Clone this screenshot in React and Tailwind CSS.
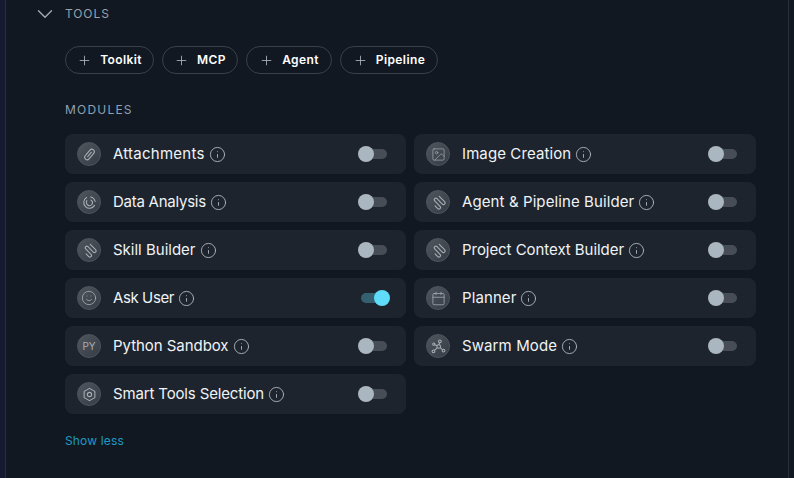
import React from "react";
import { ChevronDown, Plus, Info, Image, Smile, Calendar } from "lucide-react";

const PaperclipIcon = () => (
  <svg width="15" height="15" viewBox="0 0 14 14" fill="none" stroke="currentColor" strokeWidth="1" strokeLinecap="round">
    <g transform="rotate(40 7 7)">
      <path d="M7 4.200v5.400" />
      <path d="M4.700 9.500V3.600a2.300 2.300 0 0 1 4.600 0v6.800a2.300 2.300 0 0 1-4.600 0" />
    </g>
  </svg>
);

const PieIcon = () => (
  <svg width="15" height="15" viewBox="0 0 14 14" fill="none" stroke="currentColor" strokeWidth="1" strokeLinecap="round">
    <path d="M4.300 2.300a5.400 5.400 0 1 0 7.400 7.400" />
    <path d="M8 1.800a5.400 5.400 0 0 1 4.200 4.200" />
    <path d="M4.600 5.200a2.800 2.800 0 1 0 4.800 3.400c.8-1.500.2-3-1-3.800" />
  </svg>
);

const SpringIcon = () => (
  <svg width="15" height="15" viewBox="0 0 14 14" fill="none" stroke="currentColor" strokeWidth="1" strokeLinecap="round" strokeLinejoin="round">
    <g transform="rotate(45 7 7)">
      <path d="M3.500 2.500h7a1.500 1.500 0 0 1 0 3h-7a1.500 1.500 0 0 0 0 3h7a1.500 1.500 0 0 1 0 3H7" />
    </g>
  </svg>
);

const HexIcon = () => (
  <svg width="15" height="15" viewBox="0 0 14 14" fill="none" stroke="currentColor" strokeWidth="1" strokeLinejoin="round">
    <path d="M7 1.300 12 4.100v5.800l-5 2.800-5-2.800V4.100z" />
    <circle cx="7" cy="7" r="2" />
  </svg>
);

const SwarmIcon = () => (
  <svg width="15" height="15" viewBox="0 0 14 14" fill="none" stroke="currentColor" strokeWidth="1">
    <circle cx="7.200" cy="7" r="1.700" />
    <circle cx="8.300" cy="2.200" r="1.300" />
    <circle cx="2.300" cy="11.500" r="1.300" />
    <circle cx="11.700" cy="10.800" r="1.300" />
    <circle cx="2.600" cy="4.800" r="1" />
    <path d="M7.500 5.400 8 3.500M5.800 8.200 3.200 10.600M8.500 8 10.700 10M5.700 6.300 3.500 5.300" />
  </svg>
);

// tracking differs per row so the label widths follow the reference font
const modules = [
  { name: "Attachments", track: "tracking-[0.25px]", icon: <PaperclipIcon /> },
  { name: "Image Creation", track: "tracking-[0.1px]", icon: <Image size={15} strokeWidth={1.1} /> },
  { name: "Data Analysis", track: "tracking-[-0.25px]", icon: <PieIcon /> },
  { name: "Agent & Pipeline Builder", track: "tracking-[0.1px]", icon: <SpringIcon /> },
  { name: "Skill Builder", track: "tracking-[0px]", icon: <SpringIcon /> },
  { name: "Project Context Builder", track: "tracking-[-0.05px]", icon: <SpringIcon /> },
  { name: "Ask User", track: "tracking-[-0.4px]", icon: <Smile size={16} strokeWidth={1.2} />, on: true },
  { name: "Planner", track: "tracking-[0.1px]", icon: <Calendar size={15} strokeWidth={1.2} /> },
  { name: "Python Sandbox", track: "tracking-[-0.05px]", icon: <span className="text-[10px]">PY</span> },
  { name: "Swarm Mode", track: "tracking-[0.1px]", icon: <SwarmIcon /> },
  { name: "Smart Tools Selection", track: "tracking-[-0.15px]", icon: <HexIcon /> },
];

const chips = [
  { label: "Toolkit", width: "w-[89px]" },
  { label: "MCP", width: "w-[76px]" },
  { label: "Agent", width: "w-[86px]" },
  { label: "Pipeline", width: "w-[98px]" },
];

function Toggle({ on }) {
  return (
    <div className={`relative w-[26px] h-[10px] rounded-full ${on ? "bg-[#34606f]" : "bg-[#474d57]"}`}>
      {on ? (
        <div className="absolute right-[-3px] top-[-3px] w-4 h-4 rounded-full bg-[#5fdcfa]" />
      ) : (
        <div className="absolute left-[-3px] top-[-3px] w-4 h-4 rounded-full bg-[#aab6c0]" />
      )}
    </div>
  );
}

function ModuleRow({ name, icon, on, track }) {
  return (
    <div className="h-10 rounded-lg bg-[#1d242e] flex items-center pl-3 pr-[19px]">
      <div className="w-6 h-6 rounded-full border border-[#4f555e] bg-gradient-to-br from-[#50565e] to-[#363c45] flex items-center justify-center text-[#a9aeb5] shrink-0">
        {icon}
      </div>
      <span className={`ml-3 text-[15px] leading-[18px] mb-[1px] text-[#f0f3f6] ${track}`}>{name}</span>
      <Info size={17} strokeWidth={1.25} className="ml-[4px] text-[#b5bac0]" />
      <div className="ml-auto">
        <Toggle on={on} />
      </div>
    </div>
  );
}

export default function App() {
  return (
    <div className="w-[794px] h-[478px] overflow-hidden bg-[#111822] flex font-['Inter',sans-serif]">
      <div className="w-[6px] bg-[#161a30] border-r border-[#2a3038] shrink-0" />
      <div className="w-[782px] shrink-0 pl-[59px] pr-[32px]">
        <div className="relative h-[28px] flex items-center">
          <ChevronDown size={26} strokeWidth={1.3} className="absolute left-[-33px] top-[1px] text-[#a3a9b0]" />
          <span className="text-[12px] tracking-[0.9px] text-[#98a0aa]">TOOLS</span>
        </div>
        <div className="flex gap-2 mt-[18px]">
          {chips.map((chip) => (
            <button key={chip.label} className={`h-7 rounded-full border border-[#3a4049] flex items-center justify-center gap-[8px] text-white ${chip.width}`}>
              <Plus size={15} strokeWidth={1.3} className="text-[#b5bac0]" />
              <span className="text-[12px] font-semibold tracking-[0.4px]">{chip.label}</span>
            </button>
          ))}
        </div>
        <div className="mt-[28px] text-[12px] tracking-[1.2px] leading-[16px] text-[#8ea0b4]">MODULES</div>
        <div className="grid grid-cols-[341px_342px] gap-2 mt-4">
          {modules.map((m) => (
            <ModuleRow key={m.name} {...m} />
          ))}
        </div>
        <div className="mt-[18px] text-[12px] tracking-[0.15px] text-[#1d9ac4]">Show less</div>
      </div>
      <div className="flex-1 border-l border-[#2a3038]" />
    </div>
  );
}
